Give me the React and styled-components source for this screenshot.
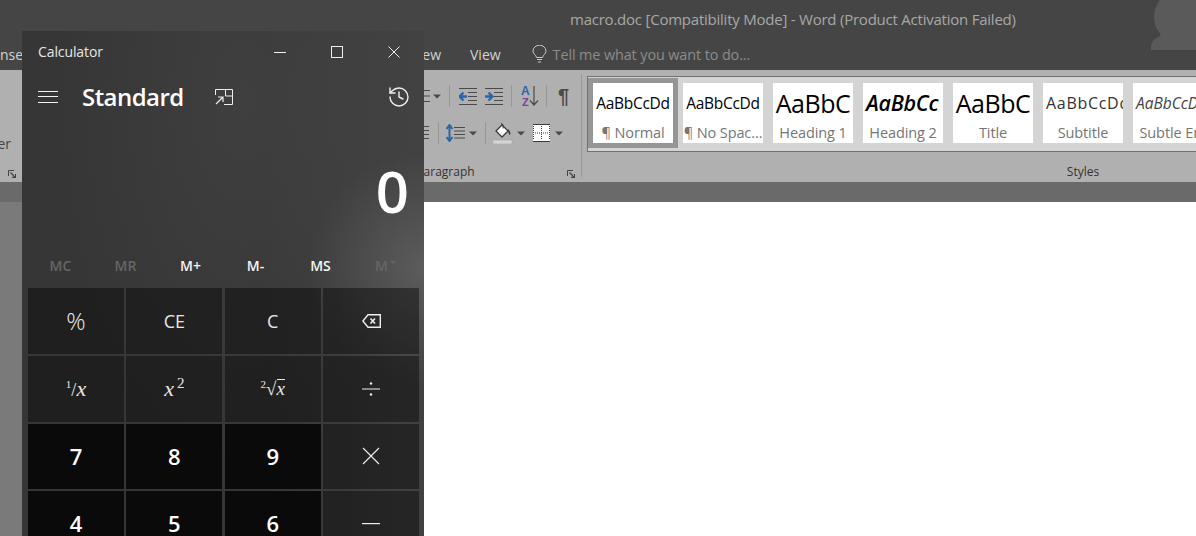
import React from 'react';
import styled, { createGlobalStyle } from 'styled-components';
import { History } from 'lucide-react';

const ui = '"Open Sans", "Noto Sans", "Liberation Sans", sans-serif';
const serif = '"Liberation Serif", serif';

const GlobalStyle = createGlobalStyle`
    html, body {
        margin: 0;
        height: 100%;
        overflow: hidden;
        background: #787878;
        font-family: ${ui};
    }
`;

const Screen = styled.div`
    position: relative;
    width: 1196px;
    height: 536px;
    overflow: hidden;
`;

/* Word window */
const WordWindow = styled.div`
    display: flex;
    flex-direction: column;
    height: 100%;
`;
const TitleBar = styled.div`
    position: relative;
    height: 70px;
    background: #454545;
    flex: none;
`;
const DocTitle = styled.div`
    height: 40px;
    line-height: 39px;
    padding-left: 570px;
    font-size: 15px;
    letter-spacing: -0.23px;
    color: #a8a8a8;
    white-space: nowrap;
`;
const TabRow = styled.div`
    display: flex;
    align-items: center;
    height: 30px;
    padding-bottom: 2px;
    box-sizing: border-box;
    font-size: 14px;
    white-space: nowrap;
`;
const HiddenTabs = styled.div`
    display: flex;
    justify-content: space-between;
    width: 445px;
    margin-left: -4px;
    margin-right: 29px;
`;
const Tab = styled.span`
    color: #d2d2d2;
`;
const TellMe = styled.div`
    display: flex;
    align-items: center;
    gap: 6px;
    margin-left: 31px;
    font-size: 14.4px;
    letter-spacing: -0.1px;
    color: #8c8c8c;
`;
const Avatar = styled.svg`
    position: absolute;
    right: 0;
    top: 0;
`;

const Ribbon = styled.div`
    display: flex;
    height: 112px;
    flex: none;
    background: #b0b0b0;
    overflow: hidden;
`;
const Group = styled.div`
    position: relative;
    flex: none;
    width: ${p => p.$width}px;
    display: flex;
    flex-direction: column;
    box-sizing: border-box;
`;
const Divider = styled.div`
    flex: none;
    width: 1px;
    margin: 4px 0 5px;
    background: #9a9a9a;
`;
const GroupBody = styled.div`
    flex: 1;
    display: flex;
    flex-direction: column;
    min-height: 0;
`;
const GroupFooter = styled.div`
    position: relative;
    height: 20px;
    text-align: center;
    line-height: 20px;
    font-size: 12px;
    color: #333;
`;
const Launcher = styled.svg`
    position: absolute;
    right: 6px;
    top: 8px;
`;
const PainterLabel = styled.div`
    display: flex;
    justify-content: flex-end;
    padding: 64px 11px 0 0;
    font-size: 14px;
    color: #444;
    white-space: nowrap;
`;
const ToolRow = styled.div`
    display: flex;
    align-items: center;
    justify-content: flex-end;
    height: 22px;
    margin-top: ${p => p.$top}px;
    padding-right: ${p => p.$right}px;
`;
const Tool = styled.svg`
    flex: none;
    margin-left: ${p => p.$gap || 0}px;
`;
const ToolSep = styled.div`
    flex: none;
    width: 1px;
    height: 22px;
    margin-left: ${p => p.$gap}px;
    background: #969696;
`;
const Pilcrow = styled.span`
    margin-left: 11px;
    font: 700 20px/22px "Liberation Sans", sans-serif;
    color: #4a4a4a;
`;

const Gallery = styled.div`
    display: flex;
    margin: 6px 0 0 5px;
    height: 73px;
    padding-top: 1px;
    box-sizing: content-box;
    background: #d4d4d4;
    border: 1px solid #707070;
    border-right: 0;
    overflow: hidden;
`;
const StyleTile = styled.div`
    flex: none;
    width: 80px;
    height: 60px;
    border: 5px solid ${p => (p.$selected ? '#959595' : 'transparent')};
    background: #fff;
    background-clip: padding-box;
    display: flex;
    flex-direction: column;
    align-items: center;
    overflow: hidden;
`;
const Sample = styled.div`
    height: 40px;
    width: 100%;
    flex: none;
    padding-left: ${p => p.$inset || 0}px;
    box-sizing: border-box;
    line-height: 40px;
    white-space: nowrap;
    overflow: hidden;
    text-align: ${p => (p.$inset ? 'left' : 'center')};
    font-size: ${p => p.$size}px;
    font-weight: ${p => p.$weight || 400};
    font-style: ${p => (p.$italic ? 'italic' : 'normal')};
    letter-spacing: ${p => p.$track || 0}px;
    color: ${p => p.$color || '#000'};
`;
const StyleName = styled.div`
    font-size: 14.5px;
    line-height: 20px;
    letter-spacing: -0.1px;
    color: #757575;
    white-space: nowrap;
`;

const DocArea = styled.div`
    flex: 1;
    display: flex;
    flex-direction: column;
    min-height: 0;
`;
const RulerStrip = styled.div`
    height: 20px;
    flex: none;
    background: #6a6a6a;
`;
const PageRow = styled.div`
    flex: 1;
    display: flex;
    padding-left: 200px;
    background: #7a7a7a;
`;
const Page = styled.div`
    flex: 1;
    background: #fff;
`;

/* Calculator window */
const CalcWindow = styled.div`
    position: absolute;
    left: 22px;
    top: 31px;
    width: 402px;
    height: 505px;
    overflow: hidden;
    color: #fff;
    background:
        radial-gradient(circle at 100% 47%, rgba(255, 255, 255, 0.14), rgba(255, 255, 255, 0) 24%),
        linear-gradient(90deg, rgba(255, 255, 255, 0) 60%, rgba(255, 255, 255, 0.06)),
        radial-gradient(ellipse at 55% 14%, #3f3f3f 0, rgba(63, 63, 63, 0) 60%),
        #363636;
`;
const CalcTitleBar = styled.div`
    display: flex;
    align-items: center;
    height: 44px;
    padding: 0 2px 3px 16px;
    box-sizing: border-box;
    font-size: 14px;
    color: #e6e6e6;
`;
const CalcTitle = styled.span`
    flex: 1;
    letter-spacing: -0.1px;
`;
const WinControl = styled.div`
    width: 57px;
    display: flex;
    align-items: center;
    justify-content: center;
`;
const CalcHeader = styled.div`
    display: flex;
    align-items: center;
    height: 44px;
    padding: 0 13px 0 16px;
`;
const ModeTitle = styled.div`
    margin: -2px 0 0 24px;
    font-size: 24px;
    font-weight: 600;
    letter-spacing: -0.55px;
`;
const OverlayIcon = styled.svg`
    margin-left: 31px;
    flex: none;
`;
const HistoryButton = styled.div`
    margin-left: auto;
    display: flex;
    color: #eee;
`;
const Display = styled.div`
    height: 131px;
    padding-right: 15px;
    text-align: right;
    font-size: 58px;
    font-weight: 600;
    line-height: 144px;
`;
const MemoryRow = styled.div`
    display: grid;
    grid-template-columns: repeat(6, 65px);
    height: 38px;
    padding: 0 6px;
    align-items: center;
`;
const MemoryKey = styled.div`
    display: flex;
    justify-content: center;
    gap: 2px;
    margin-top: -7px;
    font-size: 14px;
    font-weight: 600;
    color: ${p => (p.$disabled ? '#666' : '#f4f4f4')};
`;
const MemoryCaret = styled.svg`
    margin-top: 5px;
`;
const Keypad = styled.div`
    display: grid;
    grid-template-columns: repeat(4, 96px);
    grid-template-rows: 66px 66px 65px 66px;
    column-gap: 2.4px;
    row-gap: 2px;
    padding-left: 6px;
`;
const Key = styled.div`
    display: flex;
    align-items: center;
    justify-content: center;
    padding-bottom: ${p => (p.$digit ? 2 : 1)}px;
    box-sizing: border-box;
    background: ${p => (p.$digit ? '#0a0a0a' : 'rgba(0, 0, 0, 0.42)')};
    font-size: ${p => p.$size || (p.$digit ? 22 : 18)}px;
    font-weight: ${p => p.$weight || (p.$digit ? 600 : 400)};
    color: ${p => (p.$digit ? '#fff' : '#e8e8e8')};
`;
const MathGlyph = styled.span`
    font-family: ${serif};
    font-size: ${p => p.$size || 22}px;
    color: #e8e8e8;
    white-space: nowrap;
`;
const Var = styled.i`
    font-family: ${serif};
`;
const Sup = styled.sup`
    font-size: ${p => p.$size || 14}px;
    line-height: 0;
    vertical-align: ${p => p.$lift || 7}px;
    margin-left: ${p => p.$left || 0}px;
`;
const Slash = styled.span`
    font-size: 18px;
`;
const Over = styled.span`
    display: inline-block;
    line-height: 17px;
    border-top: 1px solid #e8e8e8;
`;

const Launch = () => (
    <Launcher width="8" height="8" viewBox="0 0 8 8" fill="none" stroke="#444">
        <path d="M.5 6V.5H6" />
        <path d="M2.500 2.500l5 5M7.500 4v3.500H4" strokeWidth="1.300" />
    </Launcher>
);

const Caret = ({ gap }) => (
    <Tool $gap={gap} width="8" height="5" viewBox="0 0 8 5">
        <path d="M0 .5h8L4 4.500z" fill="#4a4a4a" />
    </Tool>
);

const IndentIcon = ({ gap, right }) => (
    <Tool $gap={gap} width="18" height="17" viewBox="0 0 18 17" fill="none">
        <path d="M0 .5h18M9 4.500h9M9 8.500h9M9 12.500h9M0 16.500h18" stroke="#4a4a4a" />
        {right ? (
            <path d="M0 8.500h6M3.500 4.500l4 4-4 4" stroke="#2b65a8" strokeWidth="2.400" />
        ) : (
            <path d="M8 8.500H2M4.500 4.500l-4 4 4 4" stroke="#2b65a8" strokeWidth="2.400" />
        )}
    </Tool>
);

const keys = [
    { label: '%', size: 24, weight: 300 },
    { label: 'CE' },
    { label: 'C' },
    {
        label: (
            <svg width="19" height="14" viewBox="0 0 19 14" fill="none" stroke="#eee">
                <path d="M6 .7h12.300v12.600H6L.9 7z" strokeWidth="1.400" />
                <path d="M8.500 4.500l4.500 5M13 4.500l-4.500 5" strokeWidth="1.600" />
            </svg>
        ),
    },
    {
        label: (
            <MathGlyph>
                <Sup $size={11} $lift={8}>1</Sup>
                <Slash>/</Slash>
                <Var>x</Var>
            </MathGlyph>
        ),
    },
    {
        label: (
            <MathGlyph>
                <Var>x</Var>
                <Sup $size={15} $lift={8} $left={3}>2</Sup>
            </MathGlyph>
        ),
    },
    {
        label: (
            <MathGlyph $size={19}>
                <Sup $size={11} $lift={7}>2</Sup>√<Over><Var>x</Var></Over>
            </MathGlyph>
        ),
    },
    {
        label: (
            <svg width="18" height="14" viewBox="0 0 18 14" fill="#eee">
                <rect y="6.500" width="18" height="1" />
                <circle cx="9" cy="1.500" r="1.200" />
                <circle cx="9" cy="12.500" r="1.200" />
            </svg>
        ),
    },
    { label: '7', digit: true },
    { label: '8', digit: true },
    { label: '9', digit: true },
    {
        label: (
            <svg width="18" height="18" viewBox="0 0 18 18" stroke="#eee" strokeWidth="1.100">
                <path d="M1 1l16 16M17 1L1 17" />
            </svg>
        ),
    },
    { label: '4', digit: true },
    { label: '5', digit: true },
    { label: '6', digit: true },
    {
        label: (
            <svg width="18" height="2" viewBox="0 0 18 2" fill="#eee">
                <rect width="18" height="1.200" />
            </svg>
        ),
    },
];

const memory = [
    { label: 'MC', disabled: true },
    { label: 'MR', disabled: true },
    { label: 'M+' },
    { label: 'M-' },
    { label: 'MS' },
    { label: 'M', disabled: true, caret: true },
];

const styleTiles = [
    { name: '¶ Normal', text: 'AaBbCcDd', size: 15.5, track: -0.3, selected: true },
    { name: '¶ No Spac...', text: 'AaBbCcDd', size: 15.5, track: -0.3 },
    { name: 'Heading 1', text: 'AaBbC', size: 25, track: -0.5 },
    { name: 'Heading 2', text: 'AaBbCc', size: 21.5, weight: 600, italic: true, inset: 3, track: -0.3 },
    { name: 'Title', text: 'AaBbC', size: 25, track: -0.5 },
    { name: 'Subtitle', text: 'AaBbCcDd', size: 16, color: '#333', inset: 3, track: 0.7 },
    { name: 'Subtle Em', text: 'AaBbCcDd', size: 15.5, italic: true, color: '#444', inset: 3 },
];

export default function App() {
    return (
        <Screen>
            <GlobalStyle />
            <WordWindow>
                <TitleBar>
                    <DocTitle>macro.doc [Compatibility Mode] - Word (Product Activation Failed)</DocTitle>
                    <TabRow>
                        <HiddenTabs>
                            <Tab>Insert</Tab>
                            <Tab>Review</Tab>
                        </HiddenTabs>
                        <Tab>View</Tab>
                        <TellMe>
                            <svg width="15" height="18" viewBox="0 0 15 18" fill="none" stroke="#c8c8c8">
                                <path d="M4.500 12.500C4 10 1 9 1 6a6.500 5.800 0 0 1 13 0c0 3-3 4-3.500 6.500z" />
                                <path d="M5 14.500h5M6 17h3" />
                            </svg>
                            Tell me what you want to do...
                        </TellMe>
                    </TabRow>
                    <Avatar width="46" height="50" viewBox="0 0 46 50">
                        <path
                            d="M46 0H10C3 8 2 24 9 32c1.500 2 2 3 1 4-3 2-8 3-9 10v4h45z"
                            fill="#5a5a5a"
                        />
                    </Avatar>
                </TitleBar>

                <Ribbon>
                    <Group $width={22}>
                        <GroupBody>
                            <PainterLabel>Format Painter</PainterLabel>
                        </GroupBody>
                        <GroupFooter>
                            <Launch />
                        </GroupFooter>
                    </Group>
                    <Group $width={288} />
                    <Group $width={271}>
                        <GroupBody>
                            <ToolRow $top={15} $right={12}>
                                <Tool width="17" height="16" viewBox="0 0 17 16" stroke="#4a4a4a" fill="none">
                                    <path d="M3 2.500h14M3 8h14M3 13.500h14" />
                                </Tool>
                                <Caret gap={3} />
                                <ToolSep $gap={8} />
                                <IndentIcon gap={9} />
                                <IndentIcon gap={8} right />
                                <ToolSep $gap={8} />
                                <Tool $gap={9} width="18" height="22" viewBox="0 0 18 22" fill="none">
                                    <text x="0" y="10" fontFamily="Liberation Sans" fontWeight="700" fontSize="12" fill="#2b65a8">A</text>
                                    <text x="1" y="21" fontFamily="Liberation Sans" fontWeight="700" fontSize="11" fill="#7b3f9e">Z</text>
                                    <path d="M13 1v19M9 15.500l4 4.500 4-4.500" stroke="#4a4a4a" strokeWidth="1.200" />
                                </Tool>
                                <ToolSep $gap={7} />
                                <Pilcrow>¶</Pilcrow>
                            </ToolRow>
                            <ToolRow $top={15} $right={18}>
                                <Tool width="9" height="16" viewBox="0 0 9 16" stroke="#4a4a4a" fill="none">
                                    <path d="M0 1.500h9M0 5.500h9M0 9.500h9M0 13.500h9" />
                                </Tool>
                                <ToolSep $gap={9} />
                                <Tool $gap={7} width="19" height="18" viewBox="0 0 19 18" fill="none">
                                    <path d="M3.500 1v16M.5 5l3-4 3 4M.5 13l3 4 3-4" stroke="#2b65a8" strokeWidth="2" />
                                    <path d="M8 3.500h11M8 7h11M8 10.500h11M8 14h11" stroke="#4a4a4a" />
                                </Tool>
                                <Caret gap={4} />
                                <ToolSep $gap={8} />
                                <Tool $gap={7} width="20" height="22" viewBox="0 0 20 22" fill="none">
                                    <path d="M3 9l6-6 6 6-6 6z" fill="#fff" stroke="#3c3c3c" strokeWidth="1.300" />
                                    <path d="M8 1.500c2 0 2.500 2 2 5" stroke="#3c3c3c" />
                                    <path d="M15 7c2 2 3 4 2 6-1-.5-2-2-2-6z" fill="#3c3c3c" />
                                    <rect x="0" y="18" width="19" height="4" fill="#d4d4d4" stroke="#a0a0a0" strokeWidth=".6" />
                                </Tool>
                                <Caret gap={4} />
                                <Tool $gap={8} width="17" height="18" viewBox="0 0 17 18" fill="none" stroke="#3a3a3a">
                                    <rect width="17" height="18" fill="#fff" stroke="none" />
                                    <path d="M0 .5h17M0 17.500h17" strokeWidth="1.200" />
                                    <path d="M.5 2v14M16.500 2v14M8.500 2v14M2 9h13" strokeDasharray="1 1" />
                                </Tool>
                                <Caret gap={5} />
                            </ToolRow>
                        </GroupBody>
                        <GroupFooter>
                            Paragraph
                            <Launch />
                        </GroupFooter>
                    </Group>
                    <Divider />
                    <Group $width={1002}>
                        <GroupBody>
                            <Gallery>
                                {styleTiles.map(tile => (
                                    <StyleTile key={tile.name} $selected={tile.selected}>
                                        <Sample
                                            $size={tile.size}
                                            $weight={tile.weight}
                                            $italic={tile.italic}
                                            $color={tile.color}
                                            $inset={tile.inset}
                                            $track={tile.track}
                                        >
                                            {tile.text}
                                        </Sample>
                                        <StyleName>{tile.name}</StyleName>
                                    </StyleTile>
                                ))}
                            </Gallery>
                        </GroupBody>
                        <GroupFooter>Styles</GroupFooter>
                    </Group>
                </Ribbon>

                <DocArea>
                    <RulerStrip />
                    <PageRow>
                        <Page />
                    </PageRow>
                </DocArea>
            </WordWindow>

            <CalcWindow>
                <CalcTitleBar>
                    <CalcTitle>Calculator</CalcTitle>
                    <WinControl>
                        <svg width="12" height="12" viewBox="0 0 12 12" stroke="#eee">
                            <path d="M0 6.500h12" />
                        </svg>
                    </WinControl>
                    <WinControl>
                        <svg width="12" height="12" viewBox="0 0 12 12" stroke="#eee" fill="none">
                            <rect x=".5" y=".5" width="11" height="11" />
                        </svg>
                    </WinControl>
                    <WinControl>
                        <svg width="12" height="12" viewBox="0 0 12 12" stroke="#eee">
                            <path d="M.5.500l11 11M11.500.500l-11 11" />
                        </svg>
                    </WinControl>
                </CalcTitleBar>
                <CalcHeader>
                    <svg width="20" height="12" viewBox="0 0 20 12" stroke="#f2f2f2">
                        <path d="M0 .5h20M0 5.500h20M0 11.500h20" />
                    </svg>
                    <ModeTitle>Standard</ModeTitle>
                    <OverlayIcon width="18" height="16" viewBox="0 0 18 16" fill="none" stroke="#eee">
                        <path d="M6 .5h11.500v15H9M.5 6V.5H6M10.500 1v6h7" />
                        <path d="M1 15l7-7M3 8h5v5" strokeWidth="1.200" />
                    </OverlayIcon>
                    <HistoryButton>
                        <History size={24} strokeWidth={1.4} />
                    </HistoryButton>
                </CalcHeader>
                <Display>0</Display>
                <MemoryRow>
                    {memory.map(item => (
                        <MemoryKey key={item.label} $disabled={item.disabled}>
                            {item.label}
                            {item.caret && (
                                <MemoryCaret width="6" height="3" viewBox="0 0 6 3">
                                    <path d="M0 0h6L3 3z" fill="#666" />
                                </MemoryCaret>
                            )}
                        </MemoryKey>
                    ))}
                </MemoryRow>
                <Keypad>
                    {keys.map((key, i) => (
                        <Key key={i} $digit={key.digit} $size={key.size} $weight={key.weight}>
                            {key.label}
                        </Key>
                    ))}
                </Keypad>
            </CalcWindow>
        </Screen>
    );
}
